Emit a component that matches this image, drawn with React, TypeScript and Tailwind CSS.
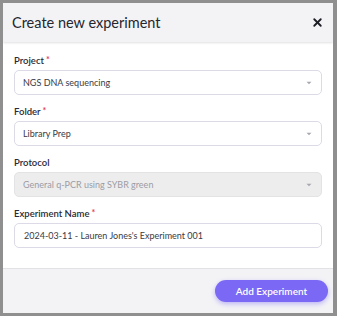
import { X } from 'lucide-react'

const font = { fontFamily: 'Lato, "Noto Sans", sans-serif' }

function Label({ text, required }: { text: string; required?: boolean }) {
  return (
    <div className="h-[10px] flex items-center text-[9.5px] font-semibold text-[#2a2a35] mb-[4px]">
      {text}
      {required && <span className="text-[#e5334b] ml-[2px] text-[9px] -mt-[3px]">*</span>}
    </div>
  )
}

function Select({ value, disabled }: { value: string; disabled?: boolean }) {
  return (
    <div
      className={`h-[25px] rounded-[5px] border flex items-center justify-between pl-[8px] pr-[8px] text-[9px] ${
        disabled ? 'bg-[#ededee] border-[#e3e3e6] text-[#9c9ca4]' : 'bg-white border-[#dcdae6] text-[#3a3a44]'
      }`}
    >
      <span>{value}</span>
      <svg width="6" height="4" viewBox="0 0 6 4" className="mr-[1px]">
        <path d="M0.5 0.8 L3 3.2 L5.5 0.8 Z" fill="#a8a8b0" />
      </svg>
    </div>
  )
}

export default function App() {
  return (
    <div className="w-[337px] h-[316px] bg-[#8f8f8f] pt-[3px] pl-[3px] pr-[4px] pb-[3px]" style={font}>
      <div className="w-[330px] h-[310px] bg-white flex flex-col overflow-hidden">
        <div className="h-[39px] bg-[#f3f3f6] flex items-center justify-between pl-[9px] pr-[9px] shadow-[0_1px_2px_rgba(0,0,0,0.12)] relative z-10">
          <span className="text-[14.5px] text-[#26262e]">Create new experiment</span>
          <X size={13} strokeWidth={3.4} className="text-[#1c1c24]" />
        </div>
        <div className="flex-1 px-[11px] pt-[14px] flex flex-col">
          <Label text="Project" required />
          <Select value="NGS DNA sequencing" />
          <div className="h-[12px]" />
          <Label text="Folder" required />
          <Select value="Library Prep" />
          <div className="h-[12px]" />
          <Label text="Protocol" />
          <Select value="General q-PCR using SYBR green" disabled />
          <div className="h-[12px]" />
          <Label text="Experiment Name" required />
          <div className="h-[25px] rounded-[5px] border border-[#dcdae6] flex items-center pl-[9px] text-[9px] text-[#3a3a44]">
            2024-03-11 - Lauren Jones's Experiment 001
          </div>
        </div>
        <div className="h-[45px] bg-[#f3f3f6] border-t border-[#e2e2e6] flex items-center justify-end pr-[5px]">
          <button className="h-[22px] w-[113px] rounded-full bg-[#7b68f4] text-white text-[10px] font-semibold shadow-[0_2px_5px_rgba(123,104,244,0.45)]">
            Add Experiment
          </button>
        </div>
      </div>
    </div>
  )
}
